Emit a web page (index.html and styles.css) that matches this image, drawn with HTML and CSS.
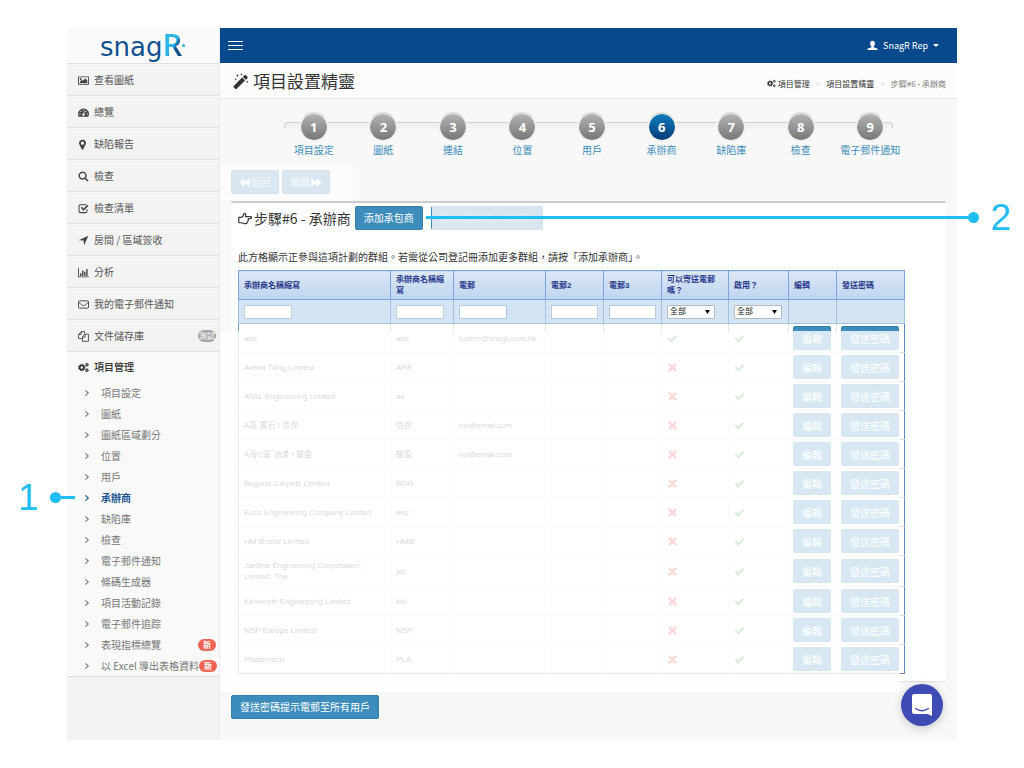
FILE: index.html
```html
<!DOCTYPE html>
<html lang="zh-Hant">
<head>
    <meta charset="UTF-8">
    <meta name="viewport" content="width=device-width, initial-scale=1.0">
    <title>項目設置精靈</title>
    <link rel="stylesheet" href="styles.css">
</head>
<body>
    <!-- Icon sprite -->
    <svg class="sprite" width="0" height="0" aria-hidden="true">
        <symbol id="i-image" viewBox="0 0 16 16"><path fill-rule="evenodd" d="M1 2h14a1 1 0 0 1 1 1v10a1 1 0 0 1-1 1H1a1 1 0 0 1-1-1V3a1 1 0 0 1 1-1zm.3 1.3v9.400h13.400V3.300zM3 11.500V9.500l2.500-2.500 1.500 1.500L10.500 5 13.500 8v3.500zM4 4.300a1.400 1.400 0 1 1 0 2.800 1.400 1.400 0 0 1 0-2.800z"/></symbol>
        <symbol id="i-dash" viewBox="0 0 16 16"><path fill-rule="evenodd" d="M8 2a8 8 0 0 1 8 8c0 1.500-.4 3-1.200 4H1.200A8 8 0 0 1 8 2zM8 3.500a1 1 0 1 0 0 2 1 1 0 0 0 0-2zM4.300 5a1 1 0 1 0 0 2 1 1 0 0 0 0-2zM2.800 9a1 1 0 1 0 0 2 1 1 0 0 0 0-2zM11.700 5a1 1 0 1 0 0 2 1 1 0 0 0 0-2zM13.200 9a1 1 0 1 0 0 2 1 1 0 0 0 0-2zM9.200 6.300L7.700 9.500a1.700 1.700 0 1 0 1.300.4l1.200-3.300z"/></symbol>
        <symbol id="i-pin" viewBox="0 0 16 16"><path fill-rule="evenodd" d="M6.500 1a5 5 0 0 1 5 5c0 1-.3 1.700-.6 2.300L7.300 15.400q-.8.900-1.600 0L2.100 8.300A5 5 0 0 1 6.500 1zm0 2.600a2.400 2.400 0 1 0 0 4.800 2.400 2.400 0 0 0 0-4.800z"/></symbol>
        <symbol id="i-search" viewBox="0 0 16 16"><path fill-rule="evenodd" d="M6.700.7a6 6 0 0 1 5 9.300l3.700 3.700-1.700 1.700L10 11.700A6 6 0 1 1 6.700.7zm0 2.100a3.900 3.900 0 1 0 0 7.800 3.900 3.900 0 0 0 0-7.800z"/></symbol>
        <symbol id="i-check-sq" viewBox="0 0 16 16"><path fill="none" stroke="currentColor" stroke-width="1.500" d="M13 9v3q0 2-2 2H3.500q-2 0-2-2V4.500q0-2 2-2H12"/><path d="M4 7l1.500-1.500L8 8l5.500-5.500L15.200 4.200 8 11.400z"/></symbol>
        <symbol id="i-arrow" viewBox="0 0 16 16"><path d="M15 1L9 15 8 8 1 7.500z"/></symbol>
        <symbol id="i-chart" viewBox="0 0 16 16"><path d="M0 1h1.300v12.700H16V15H0zM3 9h2v4H3zM6 5h2v8H6zM9 7h2v6H9zM12 3h2v10h-2z"/></symbol>
        <symbol id="i-mail" viewBox="0 0 16 16"><path fill="none" stroke="currentColor" stroke-width="1.400" d="M2 2.700h12q1.300 0 1.300 1.300v8q0 1.300-1.300 1.300H2Q.7 13.300.7 12V4Q.7 2.700 2 2.700zM1 4.500Q4 8 6.500 9.300q1.500.8 3 0Q12 8 15 4.500"/></symbol>
        <symbol id="i-copy" viewBox="0 0 16 16"><path fill="none" stroke="currentColor" stroke-width="1.300" d="M6 11H.8V5L4.500 1H9.500v3M4.700 1v4H1M6.500 8.500L10 4.700h5.200V15H6.500zM10.300 5v3.800H6.700"/></symbol>
        <symbol id="i-cogs" viewBox="0 0 16 16"><circle cx="5.500" cy="8" r="3.200" fill="none" stroke="currentColor" stroke-width="2.600"/><circle cx="5.500" cy="8" r="4.800" fill="none" stroke="currentColor" stroke-width="1.400" stroke-dasharray="1.900 1.870"/><circle cx="13" cy="4" r="1.700" fill="none" stroke="currentColor" stroke-width="1.700"/><circle cx="13" cy="12" r="1.700" fill="none" stroke="currentColor" stroke-width="1.700"/></symbol>
        <symbol id="i-chev" viewBox="0 0 8 12"><path fill="none" stroke="currentColor" stroke-width="1.600" d="M1.500 2l4.500 4-4.500 4"/></symbol>
        <symbol id="i-wand" viewBox="0 0 18 18"><path d="M.8 14.700L10.200 5.200l3.300 3.300L4 17.900q-.7.400-1.200 0L.8 15.900q-.4-.6 0-1.200zM11 4.400l2.100-2.100q.6-.4 1.200 0l2.100 2.100q.4.600 0 1.200L14.300 7.700z"/><path d="M5 1l.5 1.500L7 3l-1.500.5L5 5l-.5-1.500L3 3l1.500-.5zM9.500 0l.4 1.100 1.100.4-1.100.4-.4 1.100-.4-1.100L8 1.500l1.100-.4zM3 5.500l.4 1.100 1.100.4-1.100.4L3 8.500l-.4-1.100L1.500 7l1.100-.4zM16 8.500l.4 1.100 1.100.4-1.100.4-.4 1.100-.4-1.100-1.100-.4 1.100-.4z"/></symbol>
        <symbol id="i-user" viewBox="0 0 16 16"><path d="M8 1c2.400 0 3.500 1.700 3.500 4 0 1.700-.8 3.400-1.800 4.200v1.300l4.800 1.700q1 .5 1 2.300H.5q0-1.800 1-2.300l4.800-1.700V9.200C5.300 8.400 4.500 6.700 4.500 5c0-2.300 1.100-4 3.500-4z"/></symbol>
        <symbol id="i-hand" viewBox="0 0 18 16"><path fill="none" stroke="currentColor" stroke-width="1.500" stroke-linejoin="round" d="M1 6.500h3.500C6.500 5.500 7 4 7.500 2.200 8 .8 10.300 1.500 9.900 3.500L9.500 5.500h6.300q1.600.2 1.600 1.400t-1.600 1.400H13q1 1.500-.3 2.600.2 1.300-1 2 .1 1.600-1.700 1.600H7.500L4.500 13.500H1z"/></symbol>
        <symbol id="i-back" viewBox="0 0 16 16"><path d="M8 2v5.200L15.500 2v12L8 8.800V14L.5 8z"/></symbol>
        <symbol id="i-fwd" viewBox="0 0 16 16"><path d="M8 2v5.200L.5 2v12L8 8.800V14l7.500-6z"/></symbol>
        <symbol id="i-yes" viewBox="0 0 16 16"><path d="M.8 8.500L3 6.300l3.200 3.200L13 2.800 15.200 5l-9 9z"/></symbol>
        <symbol id="i-no" viewBox="0 0 16 16"><path d="M4 1.500l4 4 4-4L14.500 4l-4 4 4 4-2.500 2.500-4-4-4 4L1.500 12l4-4-4-4z"/></symbol>
        <symbol id="i-chat" viewBox="0 0 20 24"><path fill="#fff" d="M2 1h16q2 0 2 2v20l-4.500-2H2q-2 0-2-2V3q0-2 2-2z"/><path fill="none" stroke="#3f4bb5" stroke-width="1.300" stroke-linecap="round" d="M3.500 15.500q6.500 4.500 13 0"/></symbol>
    </svg>

    <div class="app">
        <aside class="sidebar">
            <a class="logo" href="#"><span>snag</span><span class="logo-r">R</span><i class="logo-dot"></i></a>
            <nav>
                <ul class="menu">
                    <li><a href="#"><svg class="icon"><use href="#i-image"/></svg>查看圖紙</a></li>
                    <li><a href="#"><svg class="icon"><use href="#i-dash"/></svg>總覽</a></li>
                    <li><a href="#"><svg class="icon"><use href="#i-pin"/></svg>缺陷報告</a></li>
                    <li><a href="#"><svg class="icon"><use href="#i-search"/></svg>檢查</a></li>
                    <li><a href="#"><svg class="icon"><use href="#i-check-sq"/></svg>檢查清單</a></li>
                    <li><a href="#"><svg class="icon"><use href="#i-arrow"/></svg>房間 / 區域簽收</a></li>
                    <li><a href="#"><svg class="icon"><use href="#i-chart"/></svg>分析</a></li>
                    <li><a href="#"><svg class="icon"><use href="#i-mail"/></svg>我的電子郵件通知</a></li>
                    <li><a href="#"><svg class="icon"><use href="#i-copy"/></svg>文件儲存庫<span class="badge badge-gray">測試</span></a></li>
                </ul>
                <div class="open-menu">
                    <a class="open-title" href="#"><svg class="icon"><use href="#i-cogs"/></svg>項目管理</a>
                    <ul class="submenu">
                        <li><a href="#"><svg class="chev"><use href="#i-chev"/></svg>項目設定</a></li>
                        <li><a href="#"><svg class="chev"><use href="#i-chev"/></svg>圖紙</a></li>
                        <li><a href="#"><svg class="chev"><use href="#i-chev"/></svg>圖紙區域劃分</a></li>
                        <li><a href="#"><svg class="chev"><use href="#i-chev"/></svg>位置</a></li>
                        <li><a href="#"><svg class="chev"><use href="#i-chev"/></svg>用戶</a></li>
                        <li class="active">
                            <a href="#"><svg class="chev"><use href="#i-chev"/></svg>承辦商</a>
                            <div class="callout callout-one"><b>1</b><i class="dot"></i><i class="line"></i></div>
                        </li>
                        <li><a href="#"><svg class="chev"><use href="#i-chev"/></svg>缺陷庫</a></li>
                        <li><a href="#"><svg class="chev"><use href="#i-chev"/></svg>檢查</a></li>
                        <li><a href="#"><svg class="chev"><use href="#i-chev"/></svg>電子郵件通知</a></li>
                        <li><a href="#"><svg class="chev"><use href="#i-chev"/></svg>條碼生成器</a></li>
                        <li><a href="#"><svg class="chev"><use href="#i-chev"/></svg>項目活動記錄</a></li>
                        <li><a href="#"><svg class="chev"><use href="#i-chev"/></svg>電子郵件追踪</a></li>
                        <li><a href="#"><svg class="chev"><use href="#i-chev"/></svg>表現指標總覽<span class="badge badge-red">新</span></a></li>
                        <li><a href="#"><svg class="chev"><use href="#i-chev"/></svg>以 Excel 導出表格資料<span class="badge badge-red">新</span></a></li>
                    </ul>
                </div>
            </nav>
        </aside>

        <div class="main">
            <header class="topbar">
                <button class="burger" aria-label="Menu"><i></i><i></i><i></i></button>
                <a class="user" href="#"><svg class="icon"><use href="#i-user"/></svg>SnagR Rep<i class="caret"></i></a>
            </header>

            <div class="titlebar">
                <h1><svg><use href="#i-wand"/></svg>項目設置精靈</h1>
                <nav class="crumbs">
                    <a href="#"><svg class="icon"><use href="#i-cogs"/></svg>項目管理</a><i>&gt;</i>
                    <a href="#">項目設置精靈</a><i>&gt;</i>
                    <span>步驟#6 - 承辦商</span>
                </nav>
            </div>

            <ol class="steps">
                <li><a href="#"><b>1</b>項目設定</a></li>
                <li><a href="#"><b>2</b>圖紙</a></li>
                <li><a href="#"><b>3</b>連結</a></li>
                <li><a href="#"><b>4</b>位置</a></li>
                <li><a href="#"><b>5</b>用戶</a></li>
                <li class="current"><a href="#"><b>6</b>承辦商</a></li>
                <li><a href="#"><b>7</b>缺陷庫</a></li>
                <li><a href="#"><b>8</b>檢查</a></li>
                <li><a href="#"><b>9</b>電子郵件通知</a></li>
            </ol>

            <div class="wizard-nav">
                <button class="btn btn-faded"><svg class="icon"><use href="#i-back"/></svg>返回</button>
                <button class="btn btn-faded">繼續<svg class="icon"><use href="#i-fwd"/></svg></button>
            </div>

            <section class="panel">
                <div class="panel-head">
                    <h2><svg><use href="#i-hand"/></svg>步驟#6 - 承辦商</h2>
                    <button class="btn">添加承包商</button>
                    <button class="btn btn-faded btn-export">匯出/重新載入承辦商</button>
                    <div class="callout callout-two"><i class="line"></i><i class="dot"></i><b>2</b></div>
                </div>
                <p>此方格顯示正參與這項計劃的群組。若需從公司登記冊添加更多群組，請按「添加承辦商」。</p>
                <table class="grid">
                    <colgroup>
                        <col class="c-name"><col class="c-short"><col class="c-mail"><col class="c-mail2"><col class="c-mail2"><col class="c-send"><col class="c-on"><col class="c-edit"><col class="c-pass">
                    </colgroup>
                    <thead>
                        <tr class="heads">
                            <th>承辦商名稱縮寫</th><th>承辦商名稱縮寫</th><th>電郵</th><th>電郵2</th><th>電郵3</th><th>可以寄送電郵嗎？</th><th>啟用？</th><th>編輯</th><th>發送密碼</th>
                        </tr>
                        <tr class="filters">
                            <td><input type="text" aria-label="承辦商名稱"></td>
                            <td><input type="text" aria-label="承辦商名稱縮寫"></td>
                            <td><input type="text" aria-label="電郵"></td>
                            <td><input type="text" aria-label="電郵2"></td>
                            <td><input type="text" aria-label="電郵3"></td>
                            <td><select aria-label="可以寄送電郵嗎？"><option>全部</option></select></td>
                            <td><select aria-label="啟用？"><option>全部</option></select></td>
                            <td></td>
                            <td></td>
                        </tr>
                    </thead>
                    <tbody>
                        <tr><td>abc</td><td>abc</td><td>luzern@snagr.com.hk</td><td></td><td></td><td><svg class="yes"><use href="#i-yes"/></svg></td><td><svg class="yes"><use href="#i-yes"/></svg></td><td><button class="btn">編輯</button></td><td><button class="btn">發送密碼</button></td></tr>
                        <tr><td>Arena Tiling Limited</td><td>ARE</td><td></td><td></td><td></td><td><svg class="no"><use href="#i-no"/></svg></td><td><svg class="yes"><use href="#i-yes"/></svg></td><td><button class="btn">編輯</button></td><td><button class="btn">發送密碼</button></td></tr>
                        <tr><td>ATAL Engineering Limited</td><td>ae</td><td></td><td></td><td></td><td><svg class="no"><use href="#i-no"/></svg></td><td><svg class="yes"><use href="#i-yes"/></svg></td><td><button class="btn">編輯</button></td><td><button class="btn">發送密碼</button></td></tr>
                        <tr><td>A區 雲石 / 信保</td><td>信保</td><td>no@email.com</td><td></td><td></td><td><svg class="no"><use href="#i-no"/></svg></td><td><svg class="yes"><use href="#i-yes"/></svg></td><td><button class="btn">編輯</button></td><td><button class="btn">發送密碼</button></td></tr>
                        <tr><td>A及C區 油漆 / 駿盈</td><td>駿盈</td><td>no@email.com</td><td></td><td></td><td><svg class="no"><use href="#i-no"/></svg></td><td><svg class="yes"><use href="#i-yes"/></svg></td><td><button class="btn">編輯</button></td><td><button class="btn">發送密碼</button></td></tr>
                        <tr><td>Bogans Carpets Limited</td><td>BOG</td><td></td><td></td><td></td><td><svg class="no"><use href="#i-no"/></svg></td><td><svg class="yes"><use href="#i-yes"/></svg></td><td><button class="btn">編輯</button></td><td><button class="btn">發送密碼</button></td></tr>
                        <tr><td>Ecco Engineering Company Limited</td><td>eec</td><td></td><td></td><td></td><td><svg class="no"><use href="#i-no"/></svg></td><td><svg class="yes"><use href="#i-yes"/></svg></td><td><button class="btn">編輯</button></td><td><button class="btn">發送密碼</button></td></tr>
                        <tr><td>HM Bristol Limited</td><td>HMB</td><td></td><td></td><td></td><td><svg class="no"><use href="#i-no"/></svg></td><td><svg class="yes"><use href="#i-yes"/></svg></td><td><button class="btn">編輯</button></td><td><button class="btn">發送密碼</button></td></tr>
                        <tr><td>Jardine Engineering Corporation, Limited, The</td><td>jec</td><td></td><td></td><td></td><td><svg class="no"><use href="#i-no"/></svg></td><td><svg class="yes"><use href="#i-yes"/></svg></td><td><button class="btn">編輯</button></td><td><button class="btn">發送密碼</button></td></tr>
                        <tr><td>Kenworth Engineering Limited</td><td>kel</td><td></td><td></td><td></td><td><svg class="no"><use href="#i-no"/></svg></td><td><svg class="yes"><use href="#i-yes"/></svg></td><td><button class="btn">編輯</button></td><td><button class="btn">發送密碼</button></td></tr>
                        <tr><td>NSP Europe Limited</td><td>NSP</td><td></td><td></td><td></td><td><svg class="no"><use href="#i-no"/></svg></td><td><svg class="yes"><use href="#i-yes"/></svg></td><td><button class="btn">編輯</button></td><td><button class="btn">發送密碼</button></td></tr>
                        <tr><td>Plastertech</td><td>PLA</td><td></td><td></td><td></td><td><svg class="no"><use href="#i-no"/></svg></td><td><svg class="yes"><use href="#i-yes"/></svg></td><td><button class="btn">編輯</button></td><td><button class="btn">發送密碼</button></td></tr>
                    </tbody>
                </table>
            </section>

            <button class="btn btn-remind">發送密碼提示電郵至所有用戶</button>

            <!-- white veil that dims the list -->
            <div class="veil"></div>
            <button class="chat" aria-label="Chat"><svg><use href="#i-chat"/></svg></button>
        </div>
    </div>
</body>
</html>
```
FILE: styles.css
```css
* { box-sizing: border-box; }
body {
    margin: 0; padding: 28px 67px; background: #fff; color: #333;
    font-family: "Noto Sans CJK TC", sans-serif; font-size: 10px; line-height: 14px;
}
a { color: inherit; text-decoration: none; }
ul, ol { list-style: none; margin: 0; padding: 0; }
h1, h2, p { margin: 0; font-weight: normal; }
button, input, select { font-family: inherit; font-size: inherit; line-height: inherit; }
svg { fill: currentColor; flex: none; display: block; }
.sprite { position: absolute; }
.icon { width: 11px; height: 11px; }

.app { display: flex; }

/* Sidebar */
.sidebar {
    width: 153px; flex: none; background: #f3f3f3; border-right: 1px solid #ebebeb;
}
.logo {
    display: flex; align-items: baseline; height: 36px; padding-left: 33px; background: #fafafa; border-bottom: 1px solid #e0e0e0;
    font-family: "DejaVu Sans", sans-serif; font-size: 26px; line-height: 33px; color: #12508f;
}
.logo-r {
    font-family: "Open Sans", sans-serif; font-size: 31px; font-weight: 600;
    background: linear-gradient(120deg, #2bb5e8 55%, #12508f 65%); -webkit-background-clip: text; background-clip: text; color: transparent;
}
.logo-dot { width: 3px; height: 3px; border-radius: 50%; background: #2bb5e8; align-self: center; }
.menu a, .open-title {
    display: flex; align-items: center; gap: 5px; height: 32px; padding: 0 3px 0 11px; color: #555;
    border-bottom: 1px solid #e2e2e2; border-top: 1px solid #f8f8f8; white-space: nowrap;
}
.menu .icon { color: #444; }
.open-menu { background: #f9f9f9; border-bottom: 1px solid #dedede; }
.open-title { height: 30px; border: none; color: #333; font-weight: 500; }
.submenu li { position: relative; }
.submenu a {
    display: flex; align-items: center; height: 21px; padding: 0 3px 0 17px; color: #777; white-space: nowrap;
}
.submenu .active a { color: #12508f; font-weight: bold; }
.chev { width: 6px; height: 8px; margin-right: 11px; }
.badge {
    flex: none; margin-left: auto; width: 18px; height: 12px; border-radius: 6px; color: #fff; font-size: 8px; line-height: 12px;
    font-weight: bold; text-align: center;
}
.badge-gray { background: #a5a5a5; font-weight: normal; }
.badge-red { background: #ee6352; }

/* Top bar */
.main { flex: 1; min-width: 0; position: relative; background: #f8f8f8; padding-bottom: 21px; }
.topbar {
    display: flex; justify-content: space-between; align-items: center; height: 35px; padding: 0 18px 0 8px;
    background: #07498c; color: #fff;
}
.burger {
    display: flex; flex-direction: column; gap: 3px; width: 15px; padding: 0; background: none; border: none; cursor: pointer;
}
.burger i { height: 1px; width: 15px; background: #fff; }
.user { display: flex; align-items: center; gap: 5px; font-size: 9px; }
.caret { border: 3px solid transparent; border-top-color: #fff; border-bottom: none; }
.titlebar {
    display: flex; justify-content: space-between; align-items: center; height: 36px; padding: 0 11px 0 13px;
    background: #fcfcfc; border-bottom: 1px solid #e6e6e6;
}
.titlebar h1 { display: flex; align-items: center; gap: 4px; font-size: 17px; line-height: 24px; }
.titlebar h1 svg { width: 16px; height: 16px; }
.crumbs { display: flex; align-items: center; padding-top: 6px; font-size: 8px; color: #777; }
.crumbs a { display: flex; align-items: center; gap: 2px; color: #333; }
.crumbs .icon { width: 9px; height: 9px; }
.crumbs i { margin: 0 6px; color: #ccc; font-style: normal; }

/* Steps */
.steps { display: flex; padding: 13px 52px 0 59px; }
.steps li { flex: 1 1 0; position: relative; }
.steps li::before {
    content: ""; position: absolute; left: 0; right: 0; top: 10px; height: 5px; border-top: 1px solid #ccc; background: #f1f1f1;
}
.steps li:first-child::before { left: 5px; border-left: 1px solid #ccc; border-top-left-radius: 4px; }
.steps li:last-child::before { right: 12px; border-right: 1px solid #ccc; border-top-right-radius: 4px; }
.steps a {
    position: relative; display: flex; flex-direction: column; align-items: center; gap: 1px; color: #3c8dbc; white-space: nowrap;
}
.steps b {
    width: 30px; height: 30px; border: 2px solid #f1f1f1; border-top-color: #ddd; border-radius: 50%; background: linear-gradient(#b3b3b3, #777) padding-box, #eee;
    color: #fff; font-family: "Open Sans", sans-serif; font-size: 13px; line-height: 26px; text-align: center;
}
.steps .current b { background: linear-gradient(#0d7dbd, #083c78) padding-box, #eee; }

/* Buttons */
.btn {
    display: inline-flex; align-items: center; justify-content: center; gap: 3px; height: 24px; padding: 0 8px;
    background: #3c8dbc; border: 1px solid #367fa9; border-radius: 2px; color: #fff; white-space: nowrap; cursor: pointer;
}
.btn-faded { background: #d9e6ef; border-color: #d3e2ec; color: #f7fafc; }
.btn-faded .icon { color: #fff; }
.btn-export { margin-left: 4px; border-left-color: #3c8dbc; color: #e6eff5; }
.wizard-nav { display: flex; gap: 3px; width: 133px; padding: 4px 0 6px 11px; margin-top: 9px; background: #fcfcfc; }
.wizard-nav .btn { gap: 1px; padding: 0 7px; }

/* Panel */
.panel {
    margin: 1px 11px 14px; padding: 3px 7px 7px; background: #fff; border-top: 2px solid #ccc; border-radius: 2px;
    box-shadow: 0 1px 1px rgba(0,0,0,.1);
}
.panel-head { position: relative; display: flex; align-items: center; gap: 4px; }
.panel-head h2 { display: flex; align-items: center; gap: 2px; font-size: 14px; line-height: 20px; }
.panel-head h2 svg { width: 14px; height: 13px; }
.panel p { margin: 20px 0 6px; white-space: nowrap; }

/* Grid */
.grid {
    width: 95%; table-layout: fixed; border-collapse: collapse; border: 1px solid #6f9ac5;
    font-family: "Liberation Sans", "Noto Sans CJK TC", sans-serif; font-size: 8px; line-height: 11px;
}
.c-name { width: 152px; }
.c-short { width: 63px; }
.c-mail { width: 92px; }
.c-mail2 { width: 58px; }
.c-send { width: 67px; }
.c-on { width: 60px; }
.c-edit { width: 48px; }
.c-pass { width: 68px; }
.grid th {
    height: 29px; padding: 0 4px 0 5px; border: 1px solid #7ba4dc; background: linear-gradient(#dbe7f5, #bfd5f0);
    color: #28388c; text-align: left; font-weight: bold;
}
.filters td { height: 24px; padding: 0 5px; border: 1px solid #a4c2e3; background: #d4e4f2; }
.filters input {
    display: block; width: 48px; max-width: 100%; height: 14px; padding: 0 2px; border: 1px solid #b8cce0; background: #fff;
}
.filters select {
    display: block; width: 48px; height: 14px; padding: 0 2px; border: 1px solid #b0b8c0; border-radius: 1px; appearance: none; color: #222; line-height: 12px;
    background: url("data:image/svg+xml,%3Csvg xmlns='http://www.w3.org/2000/svg' viewBox='0 0 5 4'%3E%3Cpath d='M0 0h5L2.500 4z'/%3E%3C/svg%3E") no-repeat right 4px center / 5px 4px #fff;
}
.grid tbody td { height: 29px; padding: 4px 5px; border: 1px solid #dfe5ee; border-bottom-color: #ddd; }
.grid tbody td:first-child { border-left-color: #6f9ac5; }
.grid tbody td:last-child { border-right: 1px solid #5b8bbd; }
.grid tbody tr:last-child td { border-bottom-color: #6f8ac5; }
.grid tbody td:last-child, .grid tbody td:nth-child(8) { padding: 2px 5px 2px 4px; }
.grid .btn { display: flex; width: 100%; padding: 0; font-family: "Noto Sans CJK TC", sans-serif; font-size: 10px; }
.grid tbody svg { width: 11px; height: 11px; }
.yes { color: #4f9e4a; }
.no { color: #f03c3c; }
.veil {
    position: absolute; left: 0; right: 57px; top: 303px; bottom: 48px; background: rgba(255,255,255,.8); pointer-events: none;
}
.btn-remind { margin-left: 11px; position: relative; }

/* Chat bubble */
.chat {
    position: absolute; right: 14px; bottom: 14px; width: 42px; height: 42px; padding: 0; border: none; border-radius: 50%;
    display: flex; align-items: center; justify-content: center; background: #3f4bb5; box-shadow: 0 2px 8px rgba(0,0,0,.2); cursor: pointer;
}
.chat svg { width: 20px; height: 24px; }

/* Numbered callouts */
.callout { position: absolute; z-index: 2; display: flex; align-items: center; color: #1fbdf3; }
.callout b { font-family: "Liberation Sans", sans-serif; font-size: 37px; font-weight: normal; line-height: 37px; }
.callout .dot { width: 11px; height: 11px; border-radius: 50%; background: currentColor; }
.callout .line { height: 3px; background: currentColor; }
.callout-one { left: -49px; top: -8px; }
.callout-one .dot { margin-left: 11px; }
.callout-one .line { width: 14px; }
.callout-two { left: 188px; right: -72px; top: -7px; }
.callout-two .line { flex: 1; }
.callout-two .dot { margin-right: 11px; }
```
